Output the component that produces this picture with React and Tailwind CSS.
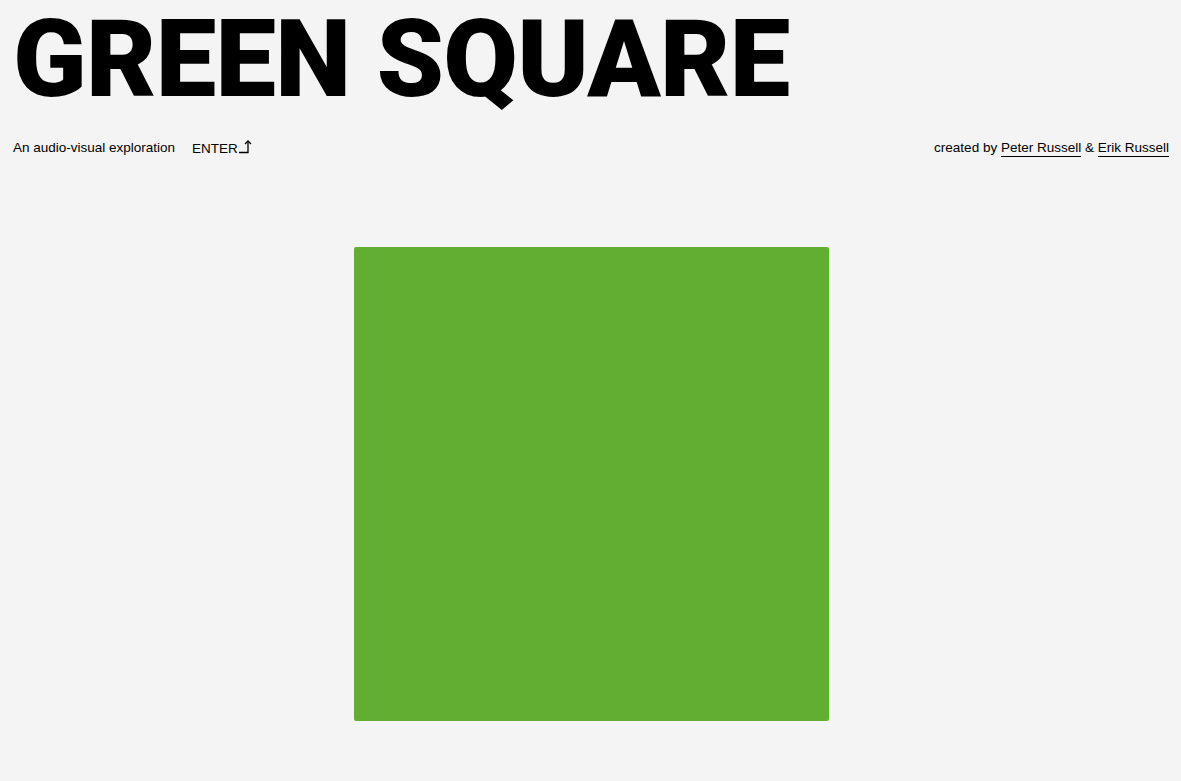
export default function App() {
  return (
    <div className="min-h-[781px] w-full bg-[#f4f4f4] text-black" style={{ fontFamily: '"Liberation Sans", Arial, sans-serif' }}>
      <h1
        className="pl-[13px] pt-[5px] text-[108px] leading-none font-black tracking-[-0.7px] whitespace-nowrap"
        style={{ fontFamily: 'Roboto, sans-serif' }}
      >
        GREEN SQUARE
      </h1>
      <div className="mt-[26px] flex items-center justify-between pl-[13px] pr-[12px] text-[13.5px] leading-[16px]">
        <div className="flex items-center">
          <span>An audio-visual exploration</span>
          <span className="ml-[17px] flex items-end">
            ENTER
            <svg width="16" height="16" viewBox="0 0 16 16" className="mb-[2px]" fill="none" stroke="black" strokeWidth="1.3">
              <path d="M1 13.5 H10 V2" />
              <path d="M7 5 L10 2 L13 5" />
            </svg>
          </span>
        </div>
        <div>
          created by <span className="border-b border-black pb-[1px]">Peter Russell</span> &amp;{' '}
          <span className="border-b border-black pb-[1px]">Erik Russell</span>
        </div>
      </div>
      <div className="mt-[90px] flex justify-center pl-[2px]">
        <div className="h-[474px] w-[475px] rounded-[2px] bg-[#62ae30]" />
      </div>
    </div>
  );
}
